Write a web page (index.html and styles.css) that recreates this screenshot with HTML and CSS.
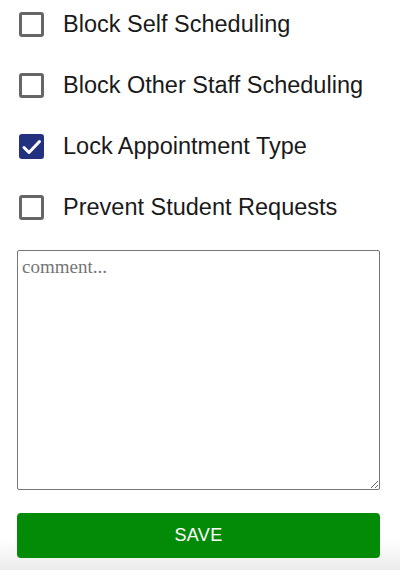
FILE: index.html
```html
<!DOCTYPE html>
<html>
<head>
<meta charset="utf-8">
<link rel="stylesheet" href="styles.css">
</head>
<body>
<div class="page">
  <div class="options">
    <label class="opt"><span class="box"></span><span class="lbl">Block Self Scheduling</span></label>
    <label class="opt"><span class="box"></span><span class="lbl">Block Other Staff Scheduling</span></label>
    <label class="opt"><span class="box checked"><svg viewBox="0 0 26 26" width="26" height="26"><polyline points="5,13.5 10,18.5 20.5,7.5" fill="none" stroke="#fff" stroke-width="3" stroke-linecap="round" stroke-linejoin="round"/></svg></span><span class="lbl">Lock Appointment Type</span></label>
    <label class="opt"><span class="box"></span><span class="lbl">Prevent Student Requests</span></label>
  </div>
  <textarea class="comment" placeholder="comment..."></textarea>
  <button class="save">SAVE</button>
</div>
</body>
</html>
```
FILE: styles.css
```css
html {
  background: linear-gradient(to bottom, #ffffff 0, #ffffff 540px, #ebebeb 570px) no-repeat;
  min-height: 570px;
}
body {
  margin: 0;
  font-family: "Liberation Sans", Arial, sans-serif;
  color: #1a1a1a;
}
.page {
  padding: 12px 20px 0 17px;
  display: flex;
  flex-direction: column;
}
.options {
  display: flex;
  flex-direction: column;
  gap: 36px;
  padding-left: 2px;
}
.opt {
  display: flex;
  align-items: center;
  height: 25px;
  gap: 19px;
}
.box {
  box-sizing: border-box;
  width: 25px;
  height: 25px;
  border: 3px solid #666666;
  border-radius: 3px;
  flex: none;
  display: flex;
  align-items: center;
  justify-content: center;
}
.box.checked {
  background: #22327f;
  border-color: #22327f;
  border-radius: 3px;
}
.box svg {
  flex: none;
}
.lbl {
  font-size: 23.5px;
  line-height: 25px;
}
.comment {
  box-sizing: border-box;
  margin: 30px 0 0 0;
  width: 363px;
  height: 240px;
  border: 1px solid #767676;
  border-radius: 2px;
  padding: 5px 4px;
  font-family: "Liberation Serif", "Times New Roman", serif;
  font-size: 19px;
  resize: both;
}
.comment::placeholder {
  color: #757575;
}
.save {
  margin-top: 23px;
  width: 363px;
  height: 45px;
  border: none;
  border-radius: 4px;
  background: #038b07;
  color: #ffffff;
  font-family: "Liberation Sans", Arial, sans-serif;
  font-size: 18px;
  letter-spacing: 0.3px;
}
```
